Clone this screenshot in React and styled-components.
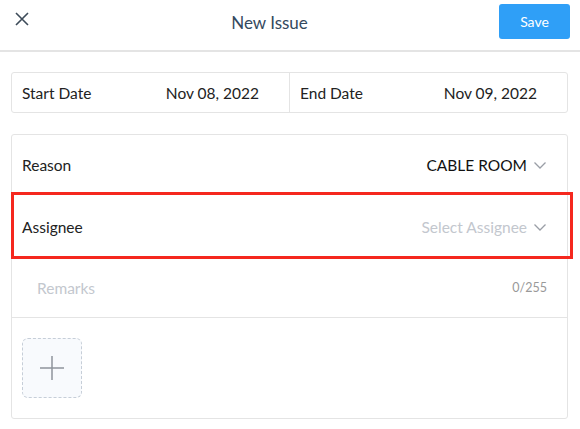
import React from 'react'
import styled, { createGlobalStyle } from 'styled-components'

const GlobalStyle = createGlobalStyle`
  body {
    margin: 0;
    background: #fff;
    font-family: Lato, "Open Sans", sans-serif;
  }
`

const Chevron = () => (
  <svg width="14" height="14" viewBox="0 0 14 14" fill="none">
    <path d="M1.5 4.5 L7 10 L12.5 4.5" stroke="#9a9ea6" strokeWidth="1.3" />
  </svg>
)

export default function App() {
  return (
    <Page>
      <GlobalStyle />
      <Header>
        <CloseButton>
          <svg width="14" height="14" viewBox="0 0 14 14">
            <path d="M1 1 L13 13 M13 1 L1 13" stroke="#3d4b59" strokeWidth="1.6" />
          </svg>
        </CloseButton>
        <Title>New Issue</Title>
        <SaveButton>Save</SaveButton>
      </Header>

      <Body>
        <DateCard>
          <DateCell>
            <span>Start Date</span>
            <span>Nov 08, 2022</span>
          </DateCell>
          <DateCell divided>
            <span>End Date</span>
            <span>Nov 09, 2022</span>
          </DateCell>
        </DateCard>

        <FormCard>
          <SelectRow>
            <Label>Reason</Label>
            <Value>
              CABLE ROOM
              <Chevron />
            </Value>
          </SelectRow>
          <SelectRow highlighted>
            <Label>Assignee</Label>
            <Value placeholder>
              Select Assignee
              <Chevron />
            </Value>
          </SelectRow>
          <RemarksRow>
            <Placeholder>Remarks</Placeholder>
            <Counter>0/255</Counter>
          </RemarksRow>
          <UploadArea>
            <AddBox>
              <svg width="24" height="24" viewBox="0 0 24 24">
                <path d="M12 0 V24 M0 12 H24" stroke="#8e949c" strokeWidth="1.5" />
              </svg>
            </AddBox>
          </UploadArea>
        </FormCard>
      </Body>
    </Page>
  )
}

const Page = styled.div`
  width: 580px;
  height: 429px;
  background: #fff;
`

const Header = styled.header`
  height: 50px;
  display: flex;
  align-items: center;
  border-bottom: 2px solid #e4e4e4;
`

const CloseButton = styled.div`
  width: 40px;
  padding-left: 15px;
  box-sizing: border-box;
  display: flex;
  align-items: center;
  align-self: flex-start;
  margin-top: 12px;
`

const Title = styled.div`
  flex: 1;
  text-align: center;
  font-size: 17px;
  color: #34495e;
  margin-top: -6px;
`

const SaveButton = styled.button`
  width: 71px;
  height: 35px;
  margin-right: 10px;
  align-self: flex-start;
  margin-top: 4px;
  border: none;
  border-radius: 3px;
  background: #2f9ff7;
  color: #fff;
  font-family: Lato, sans-serif;
  font-size: 14px;
`

const Body = styled.div`
  padding: 20px 12px 0 11px;
  display: flex;
  flex-direction: column;
  gap: 21px;
`

const DateCard = styled.div`
  display: flex;
  height: 41px;
  box-sizing: border-box;
  border: 1px solid #e4e4e4;
  border-radius: 3px;
`

const DateCell = styled.div`
  flex: 1;
  display: flex;
  align-items: center;
  justify-content: space-between;
  padding: 0 30px 0 10px;
  font-size: 15.5px;
  color: #222;
  border-left: ${p => (p.divided ? '1px solid #e4e4e4' : 'none')};
`

const FormCard = styled.div`
  border: 1px solid #e4e4e4;
  border-radius: 3px;
  display: flex;
  flex-direction: column;
  height: 285px;
  box-sizing: border-box;
`

const SelectRow = styled.div`
  height: ${p => (p.highlighted ? '63px' : '60px')};
  flex-shrink: 0;
  display: flex;
  align-items: center;
  justify-content: space-between;
  padding: 0 20px 0 10px;
  box-sizing: border-box;
  position: relative;
  ${p =>
    p.highlighted &&
    `
    &::after {
      content: '';
      position: absolute;
      left: -1px;
      right: -6px;
      top: -3px;
      bottom: -1px;
      border: 3px solid #f5281e;
    }
  `}
`

const Label = styled.span`
  font-size: 15.5px;
  color: #222;
`

const Value = styled.span`
  display: flex;
  align-items: center;
  gap: 6px;
  font-size: 15.5px;
  color: ${p => (p.placeholder ? '#c3c7ce' : '#111')};
`

const RemarksRow = styled.div`
  height: 59px;
  flex-shrink: 0;
  display: flex;
  align-items: center;
  justify-content: space-between;
  padding: 0 20px 0 25px;
  border-bottom: 1px solid #e4e4e4;
`

const Placeholder = styled.span`
  font-size: 15.5px;
  color: #c3c7ce;
`

const Counter = styled.span`
  font-size: 12.5px;
  color: #999;
`

const UploadArea = styled.div`
  padding: 20px 10px;
`

const AddBox = styled.div`
  width: 60px;
  height: 60px;
  box-sizing: border-box;
  border: 1px dashed #c6ced8;
  border-radius: 6px;
  background: #f8fafd;
  display: flex;
  align-items: center;
  justify-content: center;
`
